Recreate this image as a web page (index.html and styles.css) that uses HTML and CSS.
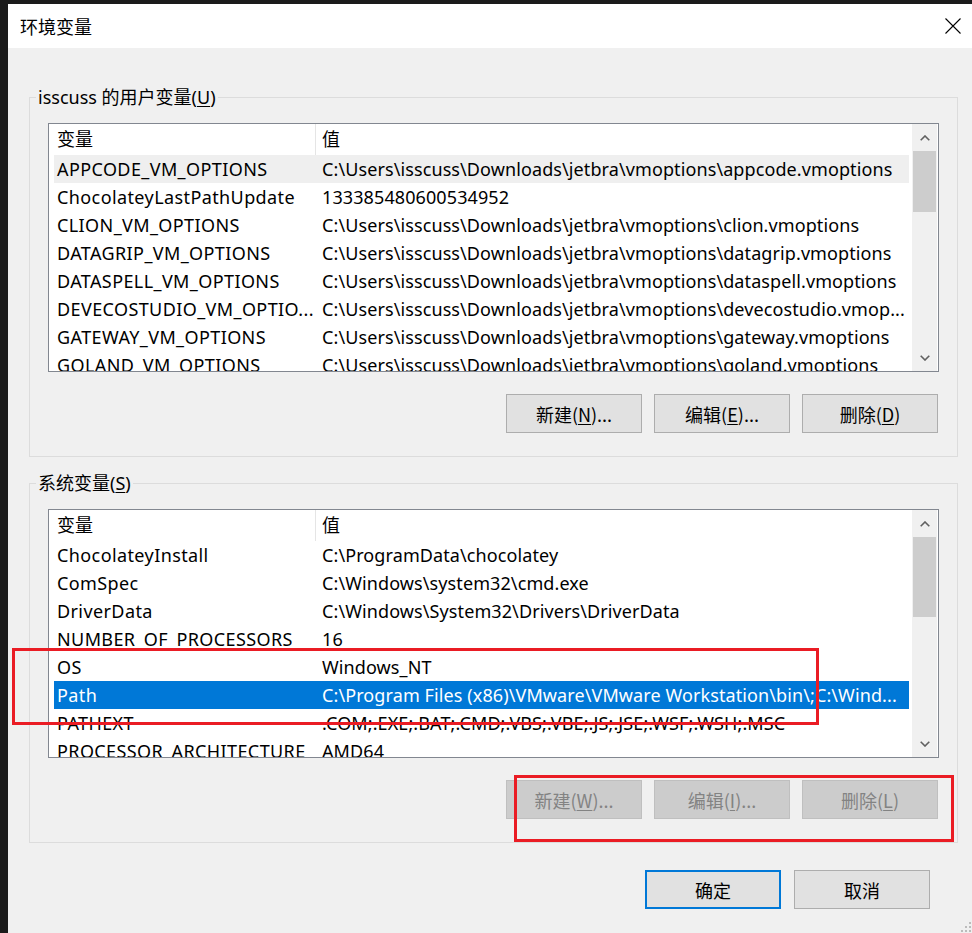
FILE: index.html
```html
<!DOCTYPE html>
<html lang="zh-CN">
<head>
<meta charset="utf-8">
<title>环境变量</title>
<link rel="stylesheet" href="styles.css">
</head>
<body>
<div class="screen">
  <div class="dialog">
    <div class="titlebar">
      <span class="title">环境变量</span>
      <svg class="close" width="16" height="16" viewBox="0 0 16 16"><path d="M0.5 0.5 L15.5 15.5 M15.5 0.5 L0.5 15.5" stroke="#000" stroke-width="1.1" fill="none"/></svg>
    </div>
    <div class="content">
      <fieldset class="group">
        <legend>isscuss 的用户变量(<u>U</u>)</legend>
        <div class="list">
          <div class="list-main">
            <div class="head"><div class="c1 hc1">变量</div><div class="c2">值</div></div>
            <div class="rows">
              <div class="row hover"><div class="c1">APPCODE_VM_OPTIONS</div><div class="c2">C:\Users\isscuss\Downloads\jetbra\vmoptions\appcode.vmoptions</div></div>
              <div class="row"><div class="c1">ChocolateyLastPathUpdate</div><div class="c2">133385480600534952</div></div>
              <div class="row"><div class="c1">CLION_VM_OPTIONS</div><div class="c2">C:\Users\isscuss\Downloads\jetbra\vmoptions\clion.vmoptions</div></div>
              <div class="row"><div class="c1">DATAGRIP_VM_OPTIONS</div><div class="c2">C:\Users\isscuss\Downloads\jetbra\vmoptions\datagrip.vmoptions</div></div>
              <div class="row"><div class="c1">DATASPELL_VM_OPTIONS</div><div class="c2">C:\Users\isscuss\Downloads\jetbra\vmoptions\dataspell.vmoptions</div></div>
              <div class="row"><div class="c1">DEVECOSTUDIO_VM_OPTIO...</div><div class="c2">C:\Users\isscuss\Downloads\jetbra\vmoptions\devecostudio.vmop...</div></div>
              <div class="row"><div class="c1">GATEWAY_VM_OPTIONS</div><div class="c2">C:\Users\isscuss\Downloads\jetbra\vmoptions\gateway.vmoptions</div></div>
              <div class="row"><div class="c1">GOLAND_VM_OPTIONS</div><div class="c2">C:\Users\isscuss\Downloads\jetbra\vmoptions\goland.vmoptions</div></div>
            </div>
          </div>
          <div class="scrollbar">
            <div class="sb-btn"><svg width="10" height="6" viewBox="0 0 10 6"><polyline points="0.7,5.3 5,1 9.3,5.3" fill="none" stroke="#606060" stroke-width="1.6"/></svg></div>
            <div class="sb-track"><div class="thumb thumb-user"></div></div>
            <div class="sb-btn"><svg width="10" height="6" viewBox="0 0 10 6"><polyline points="0.7,0.7 5,5 9.3,0.7" fill="none" stroke="#606060" stroke-width="1.6"/></svg></div>
          </div>
        </div>
        <div class="btns">
          <button class="btn">新建(<u>N</u>)...</button>
          <button class="btn">编辑(<u>E</u>)...</button>
          <button class="btn">删除(<u>D</u>)</button>
        </div>
      </fieldset>

      <fieldset class="group group-sys">
        <legend>系统变量(<u>S</u>)</legend>
        <div class="list">
          <div class="list-main">
            <div class="head"><div class="c1 hc1">变量</div><div class="c2">值</div></div>
            <div class="rows">
              <div class="row"><div class="c1">ChocolateyInstall</div><div class="c2">C:\ProgramData\chocolatey</div></div>
              <div class="row"><div class="c1">ComSpec</div><div class="c2">C:\Windows\system32\cmd.exe</div></div>
              <div class="row"><div class="c1">DriverData</div><div class="c2">C:\Windows\System32\Drivers\DriverData</div></div>
              <div class="row"><div class="c1">NUMBER_OF_PROCESSORS</div><div class="c2">16</div></div>
              <div class="row"><div class="c1">OS</div><div class="c2">Windows_NT</div></div>
              <div class="row selected"><div class="c1">Path</div><div class="c2">C:\Program Files (x86)\VMware\VMware Workstation\bin\;C:\Wind...</div></div>
              <div class="row"><div class="c1">PATHEXT</div><div class="c2">.COM;.EXE;.BAT;.CMD;.VBS;.VBE;.JS;.JSE;.WSF;.WSH;.MSC</div></div>
              <div class="row"><div class="c1">PROCESSOR_ARCHITECTURE</div><div class="c2">AMD64</div></div>
            </div>
          </div>
          <div class="scrollbar">
            <div class="sb-btn"><svg width="10" height="6" viewBox="0 0 10 6"><polyline points="0.7,5.3 5,1 9.3,5.3" fill="none" stroke="#606060" stroke-width="1.6"/></svg></div>
            <div class="sb-track"><div class="thumb thumb-sys"></div></div>
            <div class="sb-btn"><svg width="10" height="6" viewBox="0 0 10 6"><polyline points="0.7,0.7 5,5 9.3,0.7" fill="none" stroke="#606060" stroke-width="1.6"/></svg></div>
          </div>
        </div>
        <div class="btns">
          <button class="btn" disabled>新建(<u>W</u>)...</button>
          <button class="btn" disabled>编辑(<u>I</u>)...</button>
          <button class="btn" disabled>删除(<u>L</u>)</button>
        </div>
      </fieldset>

      <div class="footer">
        <button class="btn btn-default">确定</button>
        <button class="btn">取消</button>
      </div>
    </div>
    <svg class="grip" width="10" height="10" viewBox="0 0 10 10">
      <rect x="8" y="0" width="2" height="2" fill="#bcbcbc"/>
      <rect x="4" y="4" width="2" height="2" fill="#bcbcbc"/>
      <rect x="8" y="4" width="2" height="2" fill="#bcbcbc"/>
      <rect x="0" y="8" width="2" height="2" fill="#bcbcbc"/>
      <rect x="4" y="8" width="2" height="2" fill="#bcbcbc"/>
      <rect x="8" y="8" width="2" height="2" fill="#bcbcbc"/>
    </svg>
  </div>
  <div class="mark mark-path"></div>
  <div class="mark mark-btns"></div>
</div>
</body>
</html>
```

FILE: styles.css
```css
* { box-sizing: border-box; }

html, body {
  margin: 0;
  padding: 0;
  background: #1b1b1b;
}

body {
  font-family: "Noto Sans", "Noto Sans CJK SC", sans-serif;
  font-size: 18px;
  color: #000;
}

.screen {
  position: relative;
  width: 972px;
  height: 933px;
  overflow: hidden;
  padding: 4px 0 0 8px;
}

.dialog {
  position: relative;
  width: 964px;
  height: 929px;
  background: #f0f0f0;
}

.titlebar {
  height: 44px;
  background: #fff;
  display: flex;
  align-items: center;
  justify-content: space-between;
  padding: 0 11px 0 12px;
}

.title {
  font-family: "Noto Sans CJK SC", sans-serif;
  font-size: 18px;
  line-height: 24px;
}

.close { display: block; }

.content {
  padding: 37px 14px 0 21px;
}

.group {
  margin: 0;
  padding: 14px 0 23px 0;
  border: 1px solid #dcdcdc;
  min-inline-size: 0;
}

.group legend {
  margin-left: 6px;
  padding: 0 2px;
  font-size: 18px;
  line-height: 24px;
}

.group-sys { margin-top: 14px; }

u { text-decoration: underline; text-underline-offset: 2px; }

.list {
  height: 249px;
  margin: 0 18px;
  border: 1px solid #828790;
  background: #fff;
  display: flex;
}

.list-main {
  flex: 1;
  min-width: 0;
  display: flex;
  flex-direction: column;
}

.head {
  height: 31px;
  display: flex;
  align-items: stretch;
  padding: 0 3px 0 5px;
  line-height: 31px;
  flex: none;
}

.hc1 { border-right: 1px solid #e5e5e5; }

.rows {
  flex: 1;
  overflow: hidden;
}

.row {
  height: 28px;
  line-height: 28px;
  margin: 0 3px 0 5px;
  display: flex;
  letter-spacing: 0.1px;
}

.c1 {
  width: 262px;
  flex: none;
  padding-left: 3px;
  white-space: nowrap;
  overflow: hidden;
  text-overflow: ellipsis;
}

.row .c1 { letter-spacing: 0.4px; }

.c2 {
  flex: 1;
  min-width: 0;
  padding-left: 6px;
  white-space: nowrap;
  overflow: hidden;
  text-overflow: ellipsis;
}

.row.hover { background: #efefef; }

.row.selected {
  background: #0078d7;
  color: #fff;
}

.scrollbar {
  width: 25px;
  flex: none;
  background: #f0f0f0;
  display: flex;
  flex-direction: column;
  margin-right: 1px;
}

.sb-btn {
  height: 27px;
  display: flex;
  align-items: center;
  justify-content: center;
  flex: none;
}

.sb-btn svg { display: block; }

.sb-track { flex: 1; }

.thumb {
  background: #cdcdcd;
  margin: 0 1px;
}

.thumb-user { height: 61px; }
.thumb-sys { height: 80px; }

.btns {
  margin: 22px 19px 0 18px;
  display: flex;
  justify-content: flex-end;
  gap: 12px;
}

.btn {
  width: 136px;
  height: 39px;
  border: 1px solid #adadad;
  background: #e1e1e1;
  font-family: "Noto Sans CJK SC", "Noto Sans", sans-serif;
  font-size: 18px;
  color: #000;
  padding: 0;
  line-height: 24px;
}

.btn:disabled {
  background: #cccccc;
  border-color: #bfbfbf;
  color: #838383;
}

.btn-default {
  border: 2px solid #0078d7;
}

.footer {
  margin-top: 27px;
  padding-right: 28px;
  display: flex;
  justify-content: flex-end;
  gap: 13px;
}

.grip {
  position: absolute;
  right: 1px;
  bottom: 1px;
}

.mark {
  position: absolute;
  border: 3px solid #ea1c24;
}

.mark-path {
  left: 12px;
  top: 648px;
  width: 807px;
  height: 77px;
}

.mark-btns {
  left: 514px;
  top: 775px;
  width: 440px;
  height: 67px;
}
```
